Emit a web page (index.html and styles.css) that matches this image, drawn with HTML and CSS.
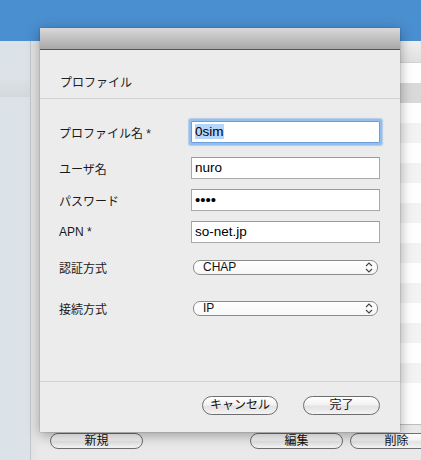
FILE: index.html
```html
<!DOCTYPE html>
<html lang="ja">
<head>
<meta charset="utf-8">
<title>プロファイル</title>
<link rel="stylesheet" href="styles.css">
</head>
<body>
<div class="app">
  <div class="topbar"></div>
  <div class="main">
    <aside class="sidebar"><div class="side-sel"></div></aside>
    <section class="content">
      <div class="table">
        <div class="thead"></div>
        <div class="row"></div>
        <div class="row sel"></div>
        <div class="row"></div>
        <div class="row alt"></div>
        <div class="row"></div>
        <div class="row alt"></div>
        <div class="row"></div>
        <div class="row alt"></div>
        <div class="row"></div>
        <div class="row alt"></div>
        <div class="row"></div>
        <div class="row alt"></div>
        <div class="row"></div>
        <div class="row alt"></div>
        <div class="row"></div>
        <div class="row alt"></div>
        <div class="row"></div>
      </div>
      <div class="actions">
        <button class="pill wide">新規</button>
        <div class="spacer"></div>
        <button class="pill wide">編集</button>
        <button class="pill wide">削除</button>
      </div>
    </section>
  </div>

  <div class="dialog">
    <div class="dlg-head"></div>
    <div class="dlg-title">プロファイル</div>
    <div class="form">
      <div class="label r1">プロファイル名 *</div>
      <div class="field focus r1"><span class="hl">0sim</span></div>
      <div class="label r2">ユーザ名</div>
      <div class="field r2">nuro</div>
      <div class="label r3">パスワード</div>
      <div class="field dots r3">••••</div>
      <div class="label r4">APN *</div>
      <div class="field r4">so-net.jp</div>
      <div class="label r5">認証方式</div>
      <div class="select r5"><span>CHAP</span>
        <svg class="chev" width="8" height="11" viewBox="0 0 8 11"><path d="M1 4 L4 1 L7 4 M1 7 L4 10 L7 7" fill="none" stroke="#444" stroke-width="1.1"/></svg>
      </div>
      <div class="label r6">接続方式</div>
      <div class="select r6"><span>IP</span>
        <svg class="chev" width="8" height="11" viewBox="0 0 8 11"><path d="M1 4 L4 1 L7 4 M1 7 L4 10 L7 7" fill="none" stroke="#444" stroke-width="1.1"/></svg>
      </div>
    </div>
    <div class="dlg-foot">
      <button class="pill cancel">キャンセル</button>
      <button class="pill ok">完了</button>
    </div>
  </div>
</div>
</body>
</html>
```

FILE: styles.css
```css
* { box-sizing: border-box; }
html, body { margin: 0; padding: 0; }
body {
  width: 421px;
  height: 460px;
  overflow: hidden;
  font-family: "Liberation Sans", "Noto Sans CJK JP", sans-serif;
  background: #e6e6e6;
}
.app {
  position: relative;
  width: 421px;
  height: 460px;
  display: flex;
  flex-direction: column;
  overflow: hidden;
}
.topbar {
  height: 41px;
  background: #4a8fd0;
  flex: none;
}
.main {
  flex: 1;
  display: flex;
  min-height: 0;
  overflow: hidden;
}
.sidebar {
  width: 31px;
  background: #dbe3e9;
  border-right: 1px solid #c3c7ca;
  padding-top: 37px;
  flex: none;
}
.side-sel {
  height: 19px;
  background: linear-gradient(#dde2e5, #d2d8dc);
}
.content {
  flex: 1;
  min-width: 0;
  display: flex;
  flex-direction: column;
  padding-left: 9px;
  overflow: hidden;
  background: linear-gradient(90deg, #e2e2e2, #e9e9e9 9px);
}
.table {
  height: 384px;
  background: #fff;
  border-bottom: 1px solid #bdbdbd;
  overflow: hidden;
  display: flex;
  flex-direction: column;
}
.thead {
  height: 22px;
  flex: none;
  background: linear-gradient(#f0f0f0, #e0e0e0);
  border-bottom: 1px solid #d4d4d4;
}
.row {
  height: 20px;
  flex: none;
  background: #fff;
}
.row:first-of-type { height: 23px; }
.row.sel { background: #d9d9d9; }
.row.alt { background: #f3f3f3; }
.actions {
  display: flex;
  align-items: center;
  padding: 8px 0 0 10px;
  gap: 7px;
  overflow: hidden;
}
.spacer { width: 93px; flex: none; }
.pill {
  font-family: "Liberation Sans", "Noto Sans CJK JP", sans-serif;
  font-size: 12px;
  color: #111;
  height: 19px;
  line-height: 17px;
  padding: 0;
  border: 1px solid #6e6e6e;
  border-radius: 10px;
  background: linear-gradient(#ffffff, #f2f2f2 45%, #e2e2e2 55%, #f4f4f4);
  flex: none;
}
.pill.wide {
  width: 93px;
  height: 16px;
  line-height: 14px;
}

/* dialog overlay */
.dialog {
  position: absolute;
  left: 40px;
  top: 28px;
  width: 360px;
  height: 404px;
  background: #ececec;
  box-shadow: 0 3px 12px rgba(0, 0, 0, 0.35), 0 0 1px rgba(0,0,0,0.4);
  display: flex;
  flex-direction: column;
}
.dlg-head {
  height: 22px;
  flex: none;
  background: linear-gradient(#d9d9d9, #a8a8a8);
  border-bottom: 1px solid #555;
}
.dlg-title {
  flex: none;
  font-family: "Noto Sans CJK JP", sans-serif;
  font-size: 12px;
  line-height: 16px;
  color: #222;
  padding: 24px 0 8px 20px;
  border-bottom: 1px solid #d2d2d2;
}
.form {
  flex: 1;
  display: grid;
  grid-template-columns: 132px 189px;
  grid-auto-rows: min-content;
  align-content: start;
  align-items: center;
  padding: 22px 0 0 19px;
}
.label {
  font-family: "Liberation Sans", "Noto Sans CJK JP", sans-serif;
  font-size: 12px;
  color: #1a1a1a;
}
.r2 { margin-top: 14px; }
.r3, .r4 { margin-top: 10px; }
.r5 { margin-top: 16px; }
.r6 { margin-top: 24px; }
.field {
  height: 22px;
  background: #fff;
  border: 1px solid #a9a9a9;
  border-top-color: #9a9a9a;
  font-size: 13.5px;
  line-height: 20px;
  padding-left: 3px;
  color: #000;
}
.field.focus {
  border-color: #6c9fd6;
  box-shadow: 0 0 0 2px #92bfee, 0 0 1px 3px rgba(120,170,230,0.5);
  border-radius: 1px;
}
.hl { background: #b5d5fb; }
.field.dots {
  font-size: 15px;
  letter-spacing: 0;
  line-height: 20px;
}
.select {
  height: 15px;
  margin-left: 2px;
  width: 185px;
  border: 1px solid #8a8a8a;
  border-radius: 7px;
  background: linear-gradient(#ffffff, #f7f7f7);
  display: flex;
  align-items: center;
  justify-content: space-between;
  padding: 0 4px 0 9px;
  font-size: 12px;
  color: #111;
  line-height: 13px;
}
.chev { flex: none; }
.dlg-foot {
  flex: none;
  height: 51px;
  border-top: 1px solid #d2d2d2;
  display: flex;
  align-items: flex-start;
  padding: 14px 0 0 162px;
  gap: 25px;
}
.cancel { width: 76px; }
.ok { width: 77px; }
```
